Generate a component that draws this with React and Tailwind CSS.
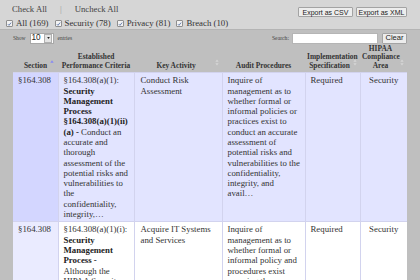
import React from 'react';

function Tick() {
    return (
        <span className="inline-flex w-[7px] h-[7px] items-center justify-center border border-[#8f8f8f] bg-[#f3f3f3] rounded-[1px]">
            <svg viewBox="0 0 8 8" className="w-[6px] h-[6px]">
                <path d="M1.4 4.3 L3.2 6.1 L6.6 1.7" fill="none" stroke="#3a5a9a" strokeWidth="1.2" />
            </svg>
        </span>
    );
}

function SortBoth() {
    return (
        <svg viewBox="0 0 5 9" className="absolute right-[3px] bottom-[6px] w-[4px] h-[7px]">
            <path d="M2.5 0.5 L4.6 3.6 L0.4 3.6 Z M2.5 8.5 L4.6 5.4 L0.4 5.4 Z" fill="#d6d6d6" />
        </svg>
    );
}

function SortAsc() {
    return (
        <svg viewBox="0 0 5 4" className="absolute right-[4px] bottom-[9px] w-[4px] h-[3px]">
            <path d="M2.5 0.2 L4.8 3.8 L0.2 3.8 Z" fill="#8688f5" />
        </svg>
    );
}

const filters = [
    { label: 'All (169)' },
    { label: 'Security (78)' },
    { label: 'Privacy (81)' },
    { label: 'Breach (10)' },
];

const rows = [
    {
        section: '§164.308',
        criteria: (
            <>§164.308(a)(1): <b className="text-[#222]">Security Management Process §164.308(a)(1)(ii) (a) -</b> Conduct an accurate and thorough assessment of the potential risks and vulnerabilities to the confidentiality, integrity,…</>
        ),
        activity: 'Conduct Risk Assessment',
        audit: 'Inquire of management as to whether formal or informal policies or practices exist to conduct an accurate assessment of potential risks and vulnerabilities to the confidentiality, integrity, and avail…',
        spec: 'Required',
        area: 'Security',
    },
    {
        section: '§164.308',
        criteria: (
            <>§164.308(a)(1)(i): <b className="text-[#222]">Security Management Process -</b> Although the HIPAA Security Rule does not prescribe a specific risk analysis methodology,…</>
        ),
        activity: 'Acquire IT Systems and Services',
        audit: 'Inquire of management as to whether formal or informal policy and procedures exist covering the acquisition of IT systems and services…',
        spec: 'Required',
        area: 'Security',
    },
];

export default function App() {
    return (
        <div className="w-[420px] h-[280px] overflow-hidden bg-[#bfbfbf] font-['Liberation_Serif','Times_New_Roman',serif] text-[#333]">
            <div className="h-[30px] bg-[#d6d6d6] border-b border-[#b4b4b4] flex justify-between pl-[6px] pr-[13px]">
                <div className="flex flex-col">
                    <div className="flex items-center h-[13px] mt-[3px] pl-[6px] text-[8.7px] text-[#444]">
                        <span>Check All</span>
                        <span className="ml-[13px] text-[#9a9a9a]">|</span>
                        <span className="ml-[13px]">Uncheck All</span>
                    </div>
                    <div className="flex items-center h-[11px] mt-[2px] gap-[6px] text-[8.8px] text-[#333]">
                        {filters.map((f) => (
                            <label key={f.label} className="flex items-center gap-[3px]">
                                <Tick />
                                <span>{f.label}</span>
                            </label>
                        ))}
                    </div>
                </div>
                <div className="flex gap-[3px] mt-[7px] h-[10px] font-['Liberation_Sans',Arial,sans-serif] text-[7px] text-[#222]">
                    <button className="w-[55px] h-[10px] leading-none bg-[#ededed] border border-[#a3a3a3] rounded-[1px]">Export as CSV</button>
                    <button className="w-[51px] h-[10px] leading-none bg-[#ededed] border border-[#a3a3a3] rounded-[1px]">Export as XML</button>
                </div>
            </div>

            <div className="flex items-center justify-between px-[13px] mt-[2px] h-[12px]">
                <div className="flex items-center text-[5.5px] text-[#444]">
                    <span>Show</span>
                    <div className="ml-[4px] w-[24px] h-[11px] bg-white border border-[#a8a8a8] flex items-center justify-between">
                        <span className="pl-[1px] font-['Liberation_Sans',Arial,sans-serif] text-[8.2px] leading-none text-[#222]">10</span>
                        <span className="w-[8px] h-[9px] mr-[0.5px] bg-[#e4e4e4] border border-[#b0b0b0] flex items-center justify-center">
                            <svg viewBox="0 0 4 3" className="w-[3px] h-[2px]"><path d="M0 0 L4 0 L2 3 Z" fill="#222" /></svg>
                        </span>
                    </div>
                    <span className="ml-[4px]">entries</span>
                </div>
                <div className="flex items-center">
                    <span className="text-[5.7px] text-[#444]">Search:</span>
                    <div className="ml-[3px] w-[86px] h-[11px] bg-white border border-[#b5b5b5]"></div>
                    <button className="ml-[4px] w-[25px] h-[11px] bg-[#ececec] border border-[#a3a3a3] rounded-[1px] font-['Liberation_Sans',Arial,sans-serif] text-[7.6px] leading-none text-[#222]">Clear</button>
                </div>
            </div>

            <div className="px-[13px]">
                <table className="w-[394px] table-fixed border-collapse">
                    <colgroup>
                        <col className="w-[45px]" />
                        <col className="w-[76px]" />
                        <col className="w-[88px]" />
                        <col className="w-[83px]" />
                        <col className="w-[55px]" />
                        <col className="w-[47px]" />
                    </colgroup>
                    <thead>
                        <tr className="text-[7.4px] leading-[8.4px] font-bold text-[#333] align-bottom">
                            <th className="relative pt-[1px] pb-[2px] pl-[2px] pr-[2px] text-center">Section<SortAsc /></th>
                            <th className="relative pt-[1px] pb-[2px] px-[2px] text-center">Established<br />Performance Criteria</th>
                            <th className="relative pt-[1px] pb-[2px] pl-[2px] pr-[6px] text-center">Key Activity<SortBoth /></th>
                            <th className="relative pt-[1px] pb-[2px] px-[2px] text-center">Audit Procedures</th>
                            <th className="relative pt-[1px] pb-[2px] pl-[2px] pr-[8px] text-center">Implementation Specification<SortBoth /></th>
                            <th className="relative pt-[1px] pb-[2px] pl-[2px] pr-[8px] text-center">HIPAA Compliance Area<SortBoth /></th>
                        </tr>
                    </thead>
                    <tbody className="text-[8.8px] leading-[10.3px]">
                        {rows.map((r, i) => (
                            <tr key={i} className={i % 2 === 0 ? 'bg-[#e2e4ff] align-top' : 'bg-white align-top'}>
                                <td className={(i % 2 === 0 ? 'bg-[#d3d6ff]' : 'bg-[#eaebff]') + ' px-[5px] py-[2px] border-t border-[#d2d3ee]'}>{r.section}</td>
                                <td className="pl-[5px] pr-[5.5px] py-[2px] border-l border-t border-[#d2d3ee]">{r.criteria}</td>
                                <td className="px-[6px] py-[2px] border-l border-t border-[#d2d3ee]">{r.activity}</td>
                                <td className="pl-[5px] pr-[4px] py-[2px] border-l border-t border-[#d2d3ee]">{r.audit}</td>
                                <td className="px-[5px] py-[2px] border-l border-t border-[#d2d3ee]">{r.spec}</td>
                                <td className="px-[3px] py-[2px] border-l border-t border-[#d2d3ee] text-center">{r.area}</td>
                            </tr>
                        ))}
                    </tbody>
                </table>
            </div>
        </div>
    );
}
